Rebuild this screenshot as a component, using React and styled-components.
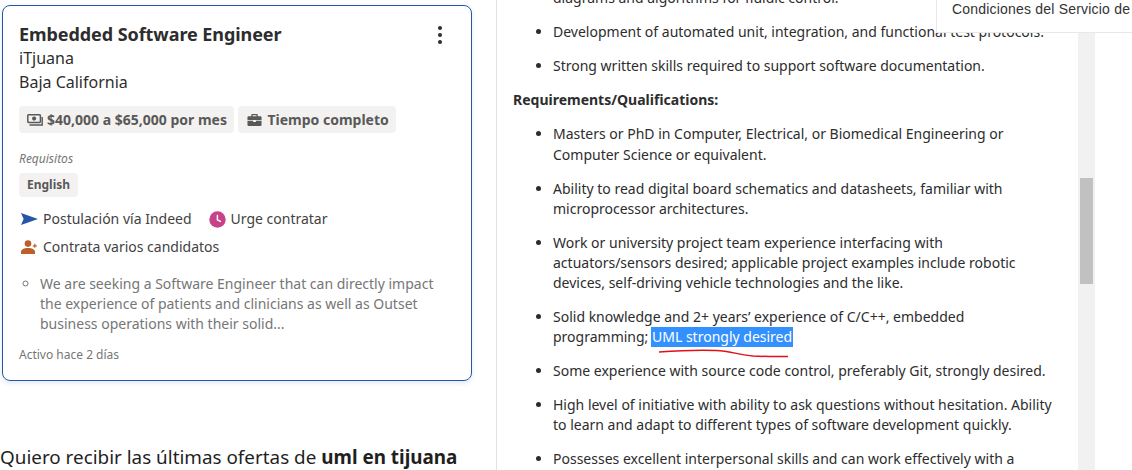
import React from "react";
import styled, { createGlobalStyle } from "styled-components";

const GlobalStyle = createGlobalStyle`
  html, body {
    margin: 0;
    padding: 0;
    background: #fff;
    overflow: hidden;
  }
  body {
    font-family: "Noto Sans", "Open Sans", sans-serif;
    color: #2d2d2d;
  }
`;

const Money = () => (
  <svg width="16" height="12" viewBox="0 0 16 12">
    <rect x="0.8" y="0.8" width="12.6" height="7.6" rx="0.8" fill="none" stroke="#595959" strokeWidth="1.5" />
    <circle cx="7.1" cy="4.6" r="2.1" fill="#595959" />
    <path d="M2.500 11h12.700V3" fill="none" stroke="#595959" strokeWidth="1.4" />
  </svg>
);

const Briefcase = () => (
  <svg width="17" height="12" viewBox="-1 0 17 12.800">
    <path
      fill="#595959"
      d="M5 0h5a1 1 0 0 1 1 1v1.400h3a1 1 0 0 1 1 1V6.300H0V3.400a1 1 0 0 1 1-1h3V1a1 1 0 0 1 1-1zm.4 1.200v1.200h4.200V1.200zM0 7.300h6v1.200h3V7.300h6v4.500a1 1 0 0 1-1 1H1a1 1 0 0 1-1-1z"
    />
  </svg>
);

const Send = () => (
  <svg width="17" height="12" viewBox="0 0 17 12">
    <path fill="#2557a7" d="M0 0 17 6 0 12 2.600 6z" />
  </svg>
);

const Clock = () => (
  <svg width="17" height="17" viewBox="0 0 17 17">
    <circle cx="8.5" cy="8.5" r="8.2" fill="#c74289" />
    <path
      d="M8.400 4.400v4.400l3 1.600"
      fill="none"
      stroke="#fff"
      strokeWidth="1.500"
      strokeLinecap="round"
    />
  </svg>
);

const People = () => (
  <svg width="17" height="14" viewBox="0 0 17 14">
    <circle cx="7" cy="3.600" r="3.300" fill="#bc5f2b" />
    <path fill="#bc5f2b" d="M0 14v-2.400C0 9.300 3.200 7.900 7 7.900s7 1.400 7 3.700V14z" />
    <path d="M13.800 3.800v4M11.800 5.800h4" stroke="#bc5f2b" strokeWidth="1.200" />
  </svg>
);

const Dots = () => (
  <svg width="6" height="20" viewBox="0 0 6 20">
    <circle cx="3" cy="3" r="2" fill="#2d2d2d" />
    <circle cx="3" cy="10" r="2" fill="#2d2d2d" />
    <circle cx="3" cy="17" r="2" fill="#2d2d2d" />
  </svg>
);

const Page = styled.div`
  display: flex;
  width: 1132px;
  height: 470px;
  overflow: hidden;
`;

const LeftColumn = styled.div`
  width: 497px;
  flex: none;
  box-sizing: border-box;
  padding: 5px 0 0 2px;
  border-right: 1px solid #e4e2e0;
`;

const Card = styled.div`
  box-sizing: border-box;
  width: 470px;
  height: 376px;
  padding: 15px 16px 0;
  border: 1px solid #2557a7;
  border-radius: 8px;
  box-shadow: 0 2px 5px rgba(37, 87, 167, 0.15);
`;

const TitleRow = styled.div`
  display: flex;
  justify-content: space-between;
  align-items: center;
  padding-right: 12px;
`;

const Title = styled.h2`
  margin: 0;
  padding-top: 1px;
  font-size: 18px;
  line-height: 24px;
  font-weight: 700;
  letter-spacing: -0.07px;
  color: #2d2d2d;
`;

const MenuButton = styled.div`
  display: flex;
  margin-top: 2px;
`;

const Company = styled.div`
  font-size: 16px;
  line-height: 24px;
  color: #2d2d2d;
`;

const Pills = styled.div`
  display: flex;
  gap: 4px;
  margin-top: 12px;
`;

const Pill = styled.div`
  display: flex;
  align-items: center;
  gap: 4px;
  height: 27px;
  padding: 0 7.5px 0 8px;
  border-radius: 4px;
  background: #f3f2f1;
  font-size: 14px;
  font-weight: 700;
  color: #595959;
`;

const ReqLabel = styled.div`
  margin-top: 17px;
  font-size: 12px;
  line-height: 18px;
  font-style: italic;
  color: #767676;
`;

const SmallPill = styled.div`
  display: inline-block;
  margin-top: 5px;
  padding: 0 8px;
  border-radius: 4px;
  background: #f3f2f1;
  font-size: 12px;
  line-height: 24px;
  font-weight: 700;
  color: #595959;
`;

const Perks = styled.div`
  display: flex;
  flex-wrap: wrap;
  gap: 8px 15px;
  width: 380px;
  margin-top: 12px;
`;

const Perk = styled.div`
  display: flex;
  align-items: center;
  gap: 5px;
  padding-left: 2px;
  font-size: 14px;
  line-height: 20px;
  color: #424242;
  &:last-child {
    width: 100%;
  }
`;

const Snippet = styled.ul`
  margin: 17px 0 0;
  padding: 0 0 0 21px;
  list-style: circle;
  font-size: 14px;
  line-height: 20px;
  color: #767676;
`;

const Posted = styled.div`
  margin-top: 12px;
  font-size: 12px;
  line-height: 18px;
  color: #767676;
`;

const AlertText = styled.p`
  margin: 63px 0 0 -2px;
  font-size: 18.88px;
  line-height: 26px;
  white-space: nowrap;
  color: #1f1f1f;
`;

const RightPanel = styled.div`
  position: relative;
  flex: 1;
  min-width: 0;
  overflow: hidden;
`;

const Description = styled.div`
  margin-top: -11.55px;
  padding-left: 16px;
  font-size: 14px;
  line-height: 20.15px;
  color: #2d2d2d;
`;

const BulletList = styled.ul`
  margin: 0;
  padding: 0 0 0 40px;
  white-space: nowrap;
  li {
    margin-bottom: 13.85px;
  }
`;

const Heading = styled.div`
  font-weight: 700;
  margin-bottom: 13.85px;
`;

const Selected = styled.span`
  position: relative;
  display: inline-block;
  margin-left: -1px;
  padding: 0 1px;
  background: #3390ff;
  color: #fff;
`;

const Scribble = styled.svg`
  position: absolute;
  left: 7px;
  top: 20px;
`;

const Track = styled.div`
  position: absolute;
  top: 0;
  bottom: 0;
  left: 581px;
  width: 17px;
  background: #f1f1f1;
`;

const Thumb = styled.div`
  position: absolute;
  top: 178px;
  left: 2px;
  width: 13px;
  height: 106px;
  background: #c1c1c1;
`;

const Terms = styled.div`
  position: absolute;
  top: -1px;
  left: 439px;
  width: 240px;
  height: 34px;
  padding: 0 0 0 15px;
  box-sizing: border-box;
  background: #fff;
  border: 1px solid #e8e8e8;
  font-family: "Liberation Sans", Arial, sans-serif;
  font-size: 14px;
  line-height: 19px;
  letter-spacing: 0.2px;
  white-space: nowrap;
  color: #333;
`;

const requirements = [
  <>
    Masters or PhD in Computer, Electrical, or Biomedical Engineering or
    <br />
    Computer Science or equivalent.
  </>,
  <>
    Ability to read digital board schematics and datasheets, familiar with
    <br />
    microprocessor architectures.
  </>,
  <>
    Work or university project team experience interfacing with
    <br />
    actuators/sensors desired; applicable project examples include robotic
    <br />
    devices, self-driving vehicle technologies and the like.
  </>,
  <>
    Solid knowledge and 2+ years’ experience of C/C++, embedded
    <br />
    programming;{" "}
    <Selected>
      UML strongly desired
      <Scribble width="132" height="12" viewBox="0 0 132 12">
        <path
          d="M1 5C22 3.500 42 3 58 3.500C72 4 82 8 95 9C108 9.700 120 9.500 130 9.500"
          fill="none"
          stroke="#e0101c"
          strokeWidth="1.500"
        />
      </Scribble>
    </Selected>
  </>,
  "Some experience with source code control, preferably Git, strongly desired.",
  <>
    High level of initiative with ability to ask questions without hesitation. Ability
    <br />
    to learn and adapt to different types of software development quickly.
  </>,
  "Possesses excellent interpersonal skills and can work effectively with a",
];

export default function App() {
  return (
    <>
      <GlobalStyle />
      <Page>
        <LeftColumn>
          <Card>
            <TitleRow>
              <Title>Embedded Software Engineer</Title>
              <MenuButton>
                <Dots />
              </MenuButton>
            </TitleRow>
            <Company>iTjuana</Company>
            <Company>Baja California</Company>
            <Pills>
              <Pill>
                <Money />
                $40,000 a $65,000 por mes
              </Pill>
              <Pill>
                <Briefcase />
                Tiempo completo
              </Pill>
            </Pills>
            <ReqLabel>Requisitos</ReqLabel>
            <SmallPill>English</SmallPill>
            <Perks>
              <Perk>
                <Send />
                Postulación vía Indeed
              </Perk>
              <Perk>
                <Clock />
                Urge contratar
              </Perk>
              <Perk>
                <People />
                Contrata varios candidatos
              </Perk>
            </Perks>
            <Snippet>
              <li>
                We are seeking a Software Engineer that can directly impact the
                experience of patients and clinicians as well as Outset
                business operations with their solid...
              </li>
            </Snippet>
            <Posted>Activo hace 2 días</Posted>
          </Card>
          <AlertText>
            Quiero recibir las últimas ofertas de <b>uml en tijuana</b>
          </AlertText>
        </LeftColumn>
        <RightPanel>
          <Description>
            <BulletList>
              <li>diagrams and algorithms for fluidic control.</li>
              <li>Development of automated unit, integration, and functional test protocols.</li>
              <li>Strong written skills required to support software documentation.</li>
            </BulletList>
            <Heading>Requirements/Qualifications:</Heading>
            <BulletList>
              {requirements.map((item, i) => (
                <li key={i}>{item}</li>
              ))}
            </BulletList>
          </Description>
          <Track>
            <Thumb />
          </Track>
          <Terms>Condiciones del Servicio de</Terms>
        </RightPanel>
      </Page>
    </>
  );
}
